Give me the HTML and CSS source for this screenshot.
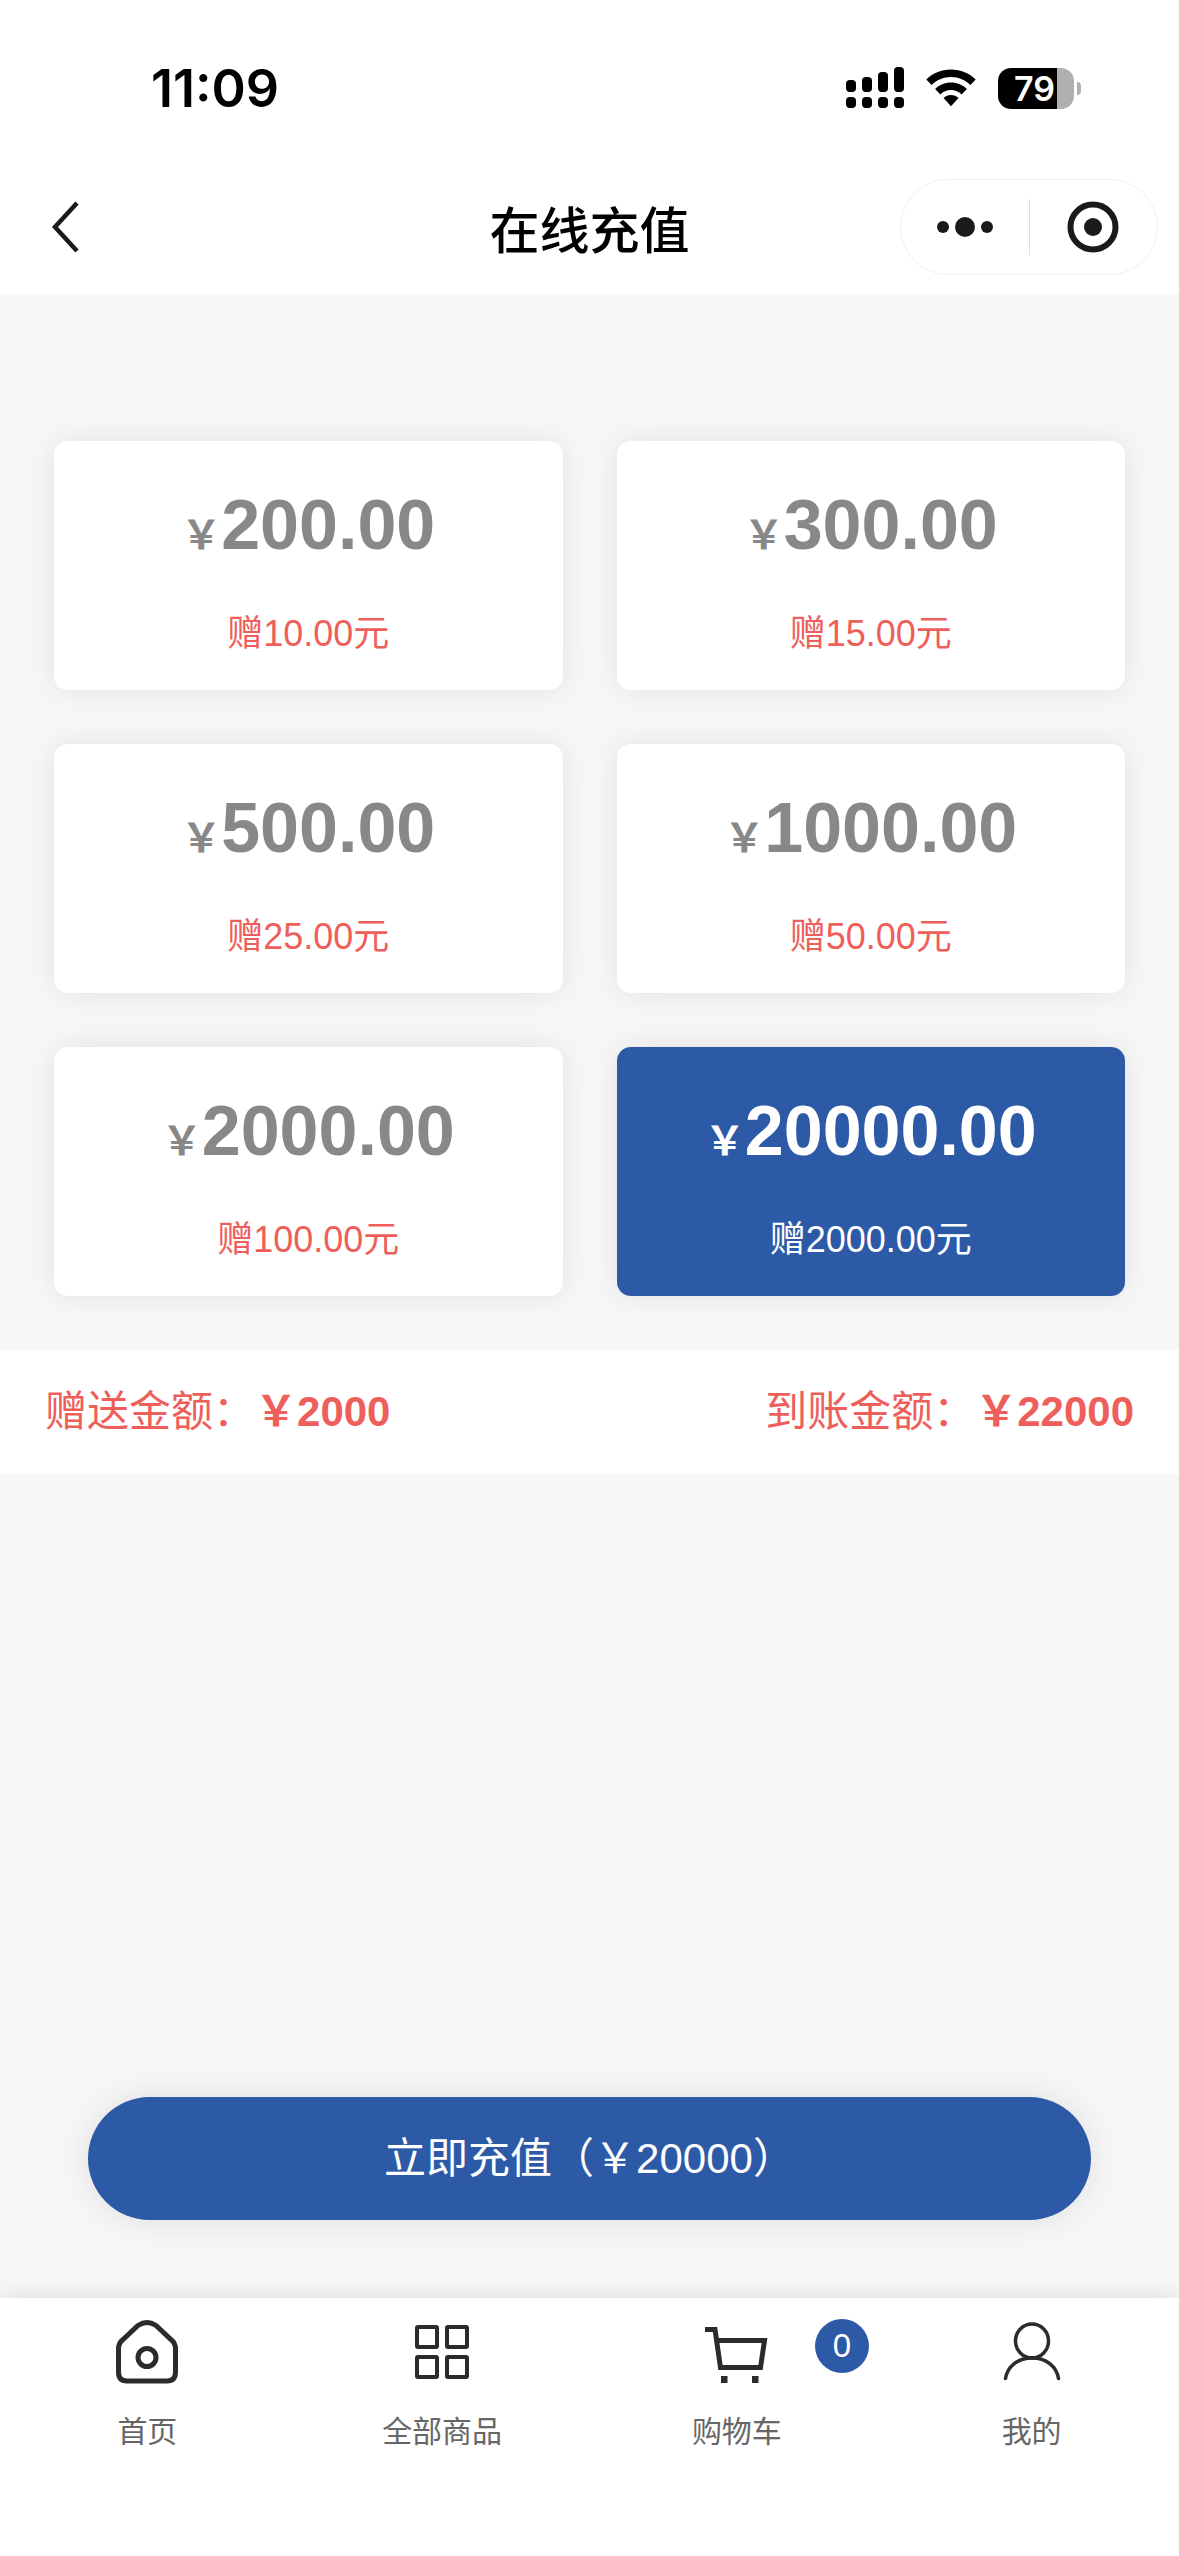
FILE: index.html
```html
<!DOCTYPE html>
<html lang="zh-CN">
<head>
    <meta charset="UTF-8">
    <meta name="viewport" content="width=device-width, initial-scale=1">
    <title>在线充值</title>
    <link rel="stylesheet" href="styles.css">
</head>
<body>

<div class="status">
    <span class="time">11:09</span>
    <div class="status-icons">
        <svg class="signal" width="58" height="42" viewBox="0 0 58 42">
            <rect x="0" y="13" width="10" height="12" rx="4"/>
            <rect x="16" y="10" width="10" height="15" rx="4"/>
            <rect x="32" y="5" width="10" height="20" rx="4"/>
            <rect x="48" y="0" width="10" height="25" rx="4"/>
            <rect x="0" y="30" width="10" height="11" rx="4"/>
            <rect x="16" y="30" width="10" height="11" rx="4"/>
            <rect x="32" y="30" width="10" height="11" rx="4"/>
            <rect x="48" y="30" width="10" height="11" rx="4"/>
        </svg>
        <svg class="wifi" width="50" height="38" viewBox="0 0 50 38">
            <path d="M25 0.500C15.300 0.500 6.600 4.300 0.300 10.500L5.600 16C10.500 11 17.400 8 25 8s14.500 3 19.400 8l5.300-5.500C43.400 4.300 34.700 0.500 25 0.500z"/>
            <path d="M25 13.500c-6.200 0-11.800 2.500-15.900 6.500l5.300 5.400c2.700-2.700 6.500-4.400 10.600-4.400s7.900 1.700 10.600 4.400l5.300-5.400c-4.100-4-9.700-6.500-15.900-6.500z"/>
            <path d="M25 26c-2.900 0-5.500 1.100-7.500 3l7.500 8.200 7.500-8.200c-2-1.900-4.600-3-7.500-3z"/>
        </svg>
        <div class="battery"><span class="level">79</span></div>
    </div>
</div>

<header class="navbar">
    <button class="back" aria-label="返回">
        <svg width="30" height="52" viewBox="0 0 30 52"><path d="M27 2L5 26l22 24" fill="none" stroke="#1a1a1a" stroke-width="4.500"/></svg>
    </button>
    <h1>在线充值</h1>
    <div class="capsule">
        <button aria-label="更多">
            <svg width="56" height="20" viewBox="0 0 56 20"><circle cx="6" cy="10" r="6"/><circle cx="28" cy="10" r="10"/><circle cx="50" cy="10" r="6"/></svg>
        </button>
        <button aria-label="关闭">
            <svg width="52" height="52" viewBox="0 0 52 52"><circle cx="26" cy="26" r="22.500" fill="none" stroke="#1a1a1a" stroke-width="6"/><circle cx="26" cy="26" r="9"/></svg>
        </button>
    </div>
</header>

<main>
    <div class="cards">
        <button class="card" data-money="200" data-gift="10">
            <span class="price"><i>&#xFFE5;</i>200.00</span>
            <span class="gift">赠10.00元</span>
        </button>
        <button class="card" data-money="300" data-gift="15">
            <span class="price"><i>&#xFFE5;</i>300.00</span>
            <span class="gift">赠15.00元</span>
        </button>
        <button class="card" data-money="500" data-gift="25">
            <span class="price"><i>&#xFFE5;</i>500.00</span>
            <span class="gift">赠25.00元</span>
        </button>
        <button class="card" data-money="1000" data-gift="50">
            <span class="price"><i>&#xFFE5;</i>1000.00</span>
            <span class="gift">赠50.00元</span>
        </button>
        <button class="card" data-money="2000" data-gift="100">
            <span class="price"><i>&#xFFE5;</i>2000.00</span>
            <span class="gift">赠100.00元</span>
        </button>
        <button class="card active" data-money="20000" data-gift="2000">
            <span class="price"><i>&#xFFE5;</i>20000.00</span>
            <span class="gift">赠2000.00元</span>
        </button>
    </div>

    <div class="total">
        <p>赠送金额&#xFF1A;<b><i>&#xFFE5;</i><span id="gift">2000</span></b></p>
        <p>到账金额&#xFF1A;<b><i>&#xFFE5;</i><span id="sum">22000</span></b></p>
    </div>

    <button class="submit">立即充值&#xFF08;<i>&#xFFE5;</i><span id="pay">20000</span>&#xFF09;</button>
</main>

<nav class="tabbar">
    <a href="#">
        <svg width="66" height="66" viewBox="0 0 66 66" fill="none" stroke="#2b2b2b" stroke-width="5">
            <path d="M24 7.500Q33 1.500 42 7.500L57 21.500Q61.500 25 61.500 31V54Q61.500 63 53 63H13Q4.500 63 4.500 54V31Q4.500 25 9 21.500Z"/>
            <circle cx="33" cy="39.500" r="9"/>
        </svg>
        <span>首页</span>
    </a>
    <a href="#">
        <svg width="66" height="66" viewBox="0 0 66 66" fill="none" stroke="#2b2b2b" stroke-width="4">
            <rect x="8" y="9" width="20" height="20" rx="1"/>
            <rect x="38" y="9" width="20" height="20" rx="1"/>
            <rect x="8" y="39" width="20" height="20" rx="1"/>
            <rect x="38" y="39" width="20" height="20" rx="1"/>
        </svg>
        <span>全部商品</span>
    </a>
    <a href="#">
        <svg width="66" height="66" viewBox="0 0 66 66" fill="none" stroke="#2b2b2b" stroke-width="5">
            <path d="M1 11.500H11L16.500 49.500H56.500L60.500 22.500H13"/>
            <path d="M17 61.500h6.500M48 61.500h6.500" stroke-width="7"/>
        </svg>
        <span>购物车</span>
        <em class="badge">0</em>
    </a>
    <a href="#">
        <svg width="66" height="66" viewBox="0 0 66 66" fill="none" stroke="#2b2b2b" stroke-width="3.500" stroke-linecap="round">
            <ellipse cx="33" cy="23" rx="16.500" ry="17"/>
            <path d="M6.500 60.500C8.500 48 19 40 33 40s24.500 8 26.500 20.500"/>
        </svg>
        <span>我的</span>
    </a>
</nav>

<script>
    let cards = document.querySelectorAll(".card");
    let gift = document.querySelector("#gift");
    let sum = document.querySelector("#sum");
    let pay = document.querySelector("#pay");

    //选择充值金额
    for (let card of cards){
        card.onclick = function () {
            document.querySelector(".card.active").classList.remove("active");
            card.classList.add("active");
            gift.innerHTML = card.dataset.gift;
            sum.innerHTML = Number(card.dataset.money) + Number(card.dataset.gift);
            pay.innerHTML = card.dataset.money;
        }
    }
</script>

</body>
</html>
```
FILE: styles.css
```css
*{
    box-sizing: border-box;
}

body{
    margin: 0;
    min-height: 100vh;
    display: flex;
    flex-direction: column;
    background-color: #f7f7f7;
    font-family: "Liberation Sans", "Noto Sans CJK SC", sans-serif;
}

button{
    border: none;
    padding: 0;
    background: none;
    font-family: inherit;
    cursor: pointer;
}

i, em{
    font-style: normal;
}

svg{
    display: block;
}

/* 状态栏 */
.status{
    height: 160px;
    padding: 16px 105px 0 151px;
    display: flex;
    justify-content: space-between;
    align-items: center;
    background-color: #fff;
}
.time{
    font: 600 52px "Inter", sans-serif;
}
.status-icons{
    display: flex;
    align-items: center;
    gap: 22px;
}
.battery{
    width: 76px;
    height: 41px;
    border-radius: 13px;
    position: relative;
    background: linear-gradient(to right, #000 59px, #b0b0b0 59px);
}
.battery::after{
    content: "";
    position: absolute;
    right: -7px;
    top: 14px;
    width: 4px;
    height: 13px;
    border-radius: 0 4px 4px 0;
    background-color: #b0b0b0;
}
.level{
    display: block;
    padding-left: 16px;
    color: #fff;
    font: 600 34px/41px "Inter", sans-serif;
}

/* 导航栏 */
.navbar{
    height: 134px;
    padding: 0 21px;
    display: grid;
    grid-template-columns: 1fr auto 1fr;
    align-items: center;
    background-color: #fff;
}
.navbar h1{
    margin: 0;
    font-size: 50px;
    line-height: 70px;
    font-weight: 500;
    font-family: "Noto Sans CJK SC", sans-serif;
}
.back{
    justify-self: start;
    padding-left: 29px;
}
.capsule{
    justify-self: end;
    width: 258px;
    height: 96px;
    border: 1px solid #f0f0f0;
    border-radius: 48px;
    display: flex;
    align-items: center;
}
.capsule button{
    flex: 1;
    height: 56px;
    display: flex;
    align-items: center;
    justify-content: center;
    fill: #1a1a1a;
}
.capsule button + button{
    border-left: 1px solid #ddd;
}

/* 充值卡片 */
main{
    flex: 1;
    display: flex;
    flex-direction: column;
}
.cards{
    padding: 147px 54px 54px;
    display: grid;
    grid-template-columns: 1fr 1fr;
    gap: 54px;
}
.card{
    padding: 36px 0 29px;
    display: flex;
    flex-direction: column;
    align-items: center;
    gap: 34px;
    border-radius: 14px;
    background-color: #fff;
    box-shadow: 0 0 30px rgba(0, 0, 0, 0.09);
    color: #888;
}
.price{
    font-size: 70px;
    line-height: 96px;
    font-weight: bold;
}
.price i{
    font-size: 40px;
    line-height: 40px;
}
.gift{
    font-size: 36px;
    line-height: 54px;
    color: #ee5f5b;
}
.card.active{
    background-color: #2d5aa7;
    color: #fff;
}
.card.active .gift{
    color: #fff;
}

.total{
    padding: 30px 45px;
    display: flex;
    justify-content: space-between;
    background-color: #fff;
    color: #ee5f5b;
    font-size: 42px;
    line-height: 64px;
}
.total p{
    margin: 0;
}

.submit{
    margin: auto 88px 78px;
    height: 123px;
    padding-bottom: 8px;
    border-radius: 62px;
    background-color: #2d5aa7;
    box-shadow: 0 0 36px rgba(0, 0, 0, 0.1);
    color: #fff;
    font-size: 42px;
}

/* 底部菜单 */
.tabbar{
    padding: 20px 0 98px;
    display: grid;
    grid-template-columns: repeat(4, 1fr);
    background-color: #fff;
    box-shadow: 0 0 24px rgba(0, 0, 0, 0.12);
}
.tabbar a{
    position: relative;
    display: flex;
    flex-direction: column;
    align-items: center;
    gap: 22px;
    color: #666;
    font-size: 30px;
    line-height: 52px;
    text-decoration: none;
}
.badge{
    position: absolute;
    left: 50%;
    top: 1px;
    margin-left: 78px;
    width: 54px;
    height: 54px;
    border-radius: 50%;
    background-color: #2d5aa7;
    color: #fff;
    font-size: 33px;
    line-height: 54px;
    text-align: center;
}
```
